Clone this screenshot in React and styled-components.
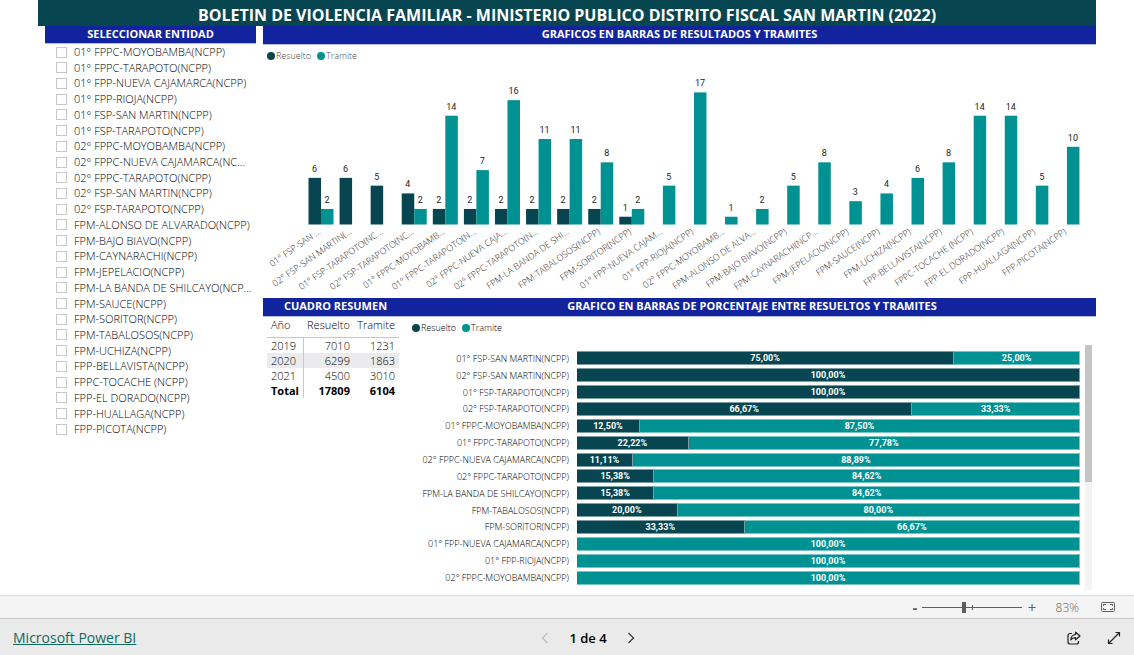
import React, { useState } from 'react'
import styled, { createGlobalStyle } from 'styled-components'

const DARK = '#074650'
const TEAL = '#009292'
const BLUE = '#12239e'

const entities = [
  '01° FPPC-MOYOBAMBA(NCPP)',
  '01° FPPC-TARAPOTO(NCPP)',
  '01° FPP-NUEVA CAJAMARCA(NCPP)',
  '01° FPP-RIOJA(NCPP)',
  '01° FSP-SAN MARTIN(NCPP)',
  '01° FSP-TARAPOTO(NCPP)',
  '02° FPPC-MOYOBAMBA(NCPP)',
  '02° FPPC-NUEVA CAJAMARCA(NC...',
  '02° FPPC-TARAPOTO(NCPP)',
  '02° FSP-SAN MARTIN(NCPP)',
  '02° FSP-TARAPOTO(NCPP)',
  'FPM-ALONSO DE ALVARADO(NCPP)',
  'FPM-BAJO BIAVO(NCPP)',
  'FPM-CAYNARACHI(NCPP)',
  'FPM-JEPELACIO(NCPP)',
  'FPM-LA BANDA DE SHILCAYO(NCP...',
  'FPM-SAUCE(NCPP)',
  'FPM-SORITOR(NCPP)',
  'FPM-TABALOSOS(NCPP)',
  'FPM-UCHIZA(NCPP)',
  'FPP-BELLAVISTA(NCPP)',
  'FPPC-TOCACHE (NCPP)',
  'FPP-EL DORADO(NCPP)',
  'FPP-HUALLAGA(NCPP)',
  'FPP-PICOTA(NCPP)',
]

// [label, resuelto, tramite]
const columns = [
  ['01° FSP-SAN ...', 6, 2],
  ['02° FSP-SAN MARTIN(...', 6, 0],
  ['01° FSP-TARAPOTO(NC...', 5, 0],
  ['02° FSP-TARAPOTO(NC...', 4, 2],
  ['01° FPPC-MOYOBAMB...', 2, 14],
  ['01° FPPC-TARAPOTO(N...', 2, 7],
  ['02° FPPC-NUEVA CAJA...', 2, 16],
  ['02° FPPC-TARAPOTO(N...', 2, 11],
  ['FPM-LA BANDA DE SHI...', 2, 11],
  ['FPM-TABALOSOS(NCPP)', 2, 8],
  ['FPM-SORITOR(NCPP)', 1, 2],
  ['01° FPP-NUEVA CAJAM...', 0, 5],
  ['01° FPP-RIOJA(NCPP)', 0, 17],
  ['02° FPPC-MOYOBAMB...', 0, 1],
  ['FPM-ALONSO DE ALVA...', 0, 2],
  ['FPM-BAJO BIAVO(NCPP)', 0, 5],
  ['FPM-CAYNARACHI(NCP...', 0, 8],
  ['FPM-JEPELACIO(NCPP)', 0, 3],
  ['FPM-SAUCE(NCPP)', 0, 4],
  ['FPM-UCHIZA(NCPP)', 0, 6],
  ['FPP-BELLAVISTA(NCPP)', 0, 8],
  ['FPPC-TOCACHE (NCPP)', 0, 14],
  ['FPP-EL DORADO(NCPP)', 0, 14],
  ['FPP-HUALLAGA(NCPP)', 0, 5],
  ['FPP-PICOTA(NCPP)', 0, 10],
]

const shares = [
  ['01° FSP-SAN MARTIN(NCPP)', 75],
  ['02° FSP-SAN MARTIN(NCPP)', 100],
  ['01° FSP-TARAPOTO(NCPP)', 100],
  ['02° FSP-TARAPOTO(NCPP)', 66.67],
  ['01° FPPC-MOYOBAMBA(NCPP)', 12.5],
  ['01° FPPC-TARAPOTO(NCPP)', 22.22],
  ['02° FPPC-NUEVA CAJAMARCA(NCPP)', 11.11],
  ['02° FPPC-TARAPOTO(NCPP)', 15.38],
  ['FPM-LA BANDA DE SHILCAYO(NCPP)', 15.38],
  ['FPM-TABALOSOS(NCPP)', 20],
  ['FPM-SORITOR(NCPP)', 33.33],
  ['01° FPP-NUEVA CAJAMARCA(NCPP)', 0],
  ['01° FPP-RIOJA(NCPP)', 0],
  ['02° FPPC-MOYOBAMBA(NCPP)', 0],
]

const summary = [
  [2019, 7010, 1231],
  [2020, 6299, 1863],
  [2021, 4500, 3010],
]

const percent = (n) => n.toFixed(2).replace('.', ',') + '%'

const GlobalStyle = createGlobalStyle`
  * {
    box-sizing: border-box;
  }

  body {
    margin: 0;
    background: #fff;
    color: #000;
    font-family: 'Open Sans', 'Noto Sans', sans-serif;
    font-size: 11px;
  }

  button {
    padding: 0;
    border: 0;
    background: none;
    font: inherit;
    color: inherit;
    cursor: pointer;
  }
`

const Page = styled.div`
  display: flex;
  flex-direction: column;
  min-height: 100vh;
`

const Report = styled.main`
  flex: 1;
  padding: 0 38px;
`

const Title = styled.h1`
  margin: 0;
  padding-top: 4px;
  height: 26px;
  background: ${DARK};
  color: #fff;
  font-size: 16px;
  line-height: 22px;
  font-weight: 700;
  text-align: center;
  white-space: nowrap;
`

const Body = styled.div`
  display: grid;
  grid-template-columns: 211px minmax(0, 1fr);
  gap: 7px;
  padding-left: 7px;
`

const Heading = styled.h2`
  margin: 0;
  height: ${({ $tall }) => ($tall ? 19 : 18)}px;
  border-bottom: 1px solid #b4b9e0;
  background: ${BLUE};
  color: #fff;
  font-size: 11px;
  line-height: 16px;
  font-weight: 700;
  text-align: center;
  white-space: nowrap;
`

const Slicer = styled.ul`
  display: grid;
  grid-template-rows: repeat(25, minmax(0, 1fr));
  height: 393px;
  margin: 0;
  padding: 0 0 0 11px;
  list-style: none;
`

const SlicerItem = styled.label`
  display: flex;
  align-items: center;
  gap: 7px;
  font-size: 11px;
  line-height: 16px;
  font-weight: 350;
  white-space: nowrap;
`

const Check = styled.input`
  appearance: none;
  flex: none;
  width: 11px;
  height: 11px;
  margin: 0;
  border: 1px solid #c8c8c8;
  background: #fff;

  &:checked {
    background: #333;
  }
`

const Legend = styled.div`
  display: flex;
  align-items: center;
  gap: 6px;
  height: 22px;
  padding-left: 4px;
  color: ${({ $dark }) => ($dark ? '#000' : '#484644')};
  font-size: 9px;
  line-height: 12px;
  font-weight: 350;
`

const LegendItem = styled.span`
  display: flex;
  align-items: center;
  gap: 1px;

  &::before {
    content: '';
    width: 8px;
    height: 8px;
    border-radius: 50%;
    background: ${({ $color }) => $color};
  }
`

const Chart = styled.svg`
  display: block;
  width: 100%;
`

const ValueText = styled.text`
  fill: #252423;
  font-family: Roboto, sans-serif;
  font-size: 9px;
  text-anchor: middle;
`

const AxisText = styled.text`
  fill: #252423;
  font-size: 9px;
  font-weight: 350;
  text-anchor: end;
`

const Lower = styled.div`
  display: grid;
  grid-template-columns: 145px minmax(0, 1fr);
`

const Table = styled.table`
  width: 132px;
  margin-left: 4px;
  border-collapse: collapse;
  font-size: 11px;
  line-height: 15px;

  th,
  td {
    padding: 0 4px 0 0;
    text-align: right;
    font-weight: 350;
  }

  th:first-child {
    width: 36px;
    padding-left: 4px;
    text-align: left;
  }

  thead th {
    height: 20px;
    padding-bottom: 5px;
    border-bottom: 1px solid #c8c8c8;
  }

  tbody th,
  tfoot th {
    border-right: 1px solid #c8c8c8;
  }

  tbody tr:nth-child(2) {
    background: #ebebed;
  }

  tfoot th,
  tfoot td {
    font-weight: 700;
  }
`

const ShareArea = styled.div`
  display: flex;
  gap: 5px;
  height: 245px;
  margin-top: 6px;
  padding-right: 4px;
`

const ShareRows = styled.div`
  flex: 1;
  display: grid;
  grid-template-rows: repeat(14, 1fr);
  height: 236px;
  margin-top: 5px;
`

const ShareRow = styled.div`
  display: grid;
  grid-template-columns: 161px minmax(0, 1fr);
  gap: 8px;
  align-items: center;
`

const ShareLabel = styled.span`
  font-size: 9px;
  line-height: 13px;
  font-weight: 350;
  text-align: right;
  white-space: nowrap;
`

const ShareBar = styled.div`
  display: flex;
  height: 14px;
`

const Segment = styled.div`
  background: ${({ $color }) => $color};
  background-clip: padding-box;
  border: 1px solid ${({ $color }) => $color}88;
  border-left-width: 0;
  color: #fff;
  font-family: Roboto, sans-serif;
  font-size: 9px;
  line-height: 13px;
  font-weight: 700;
  text-align: center;
`

const ScrollTrack = styled.div`
  width: 7px;
  background: #f3f3f3;
`

const ScrollThumb = styled.div`
  height: 137px;
  background: #c4c4c4;
`

const ZoomBar = styled.div`
  display: flex;
  align-items: center;
  justify-content: flex-end;
  height: 23px;
  padding-right: 18px;
  border-top: 1px solid #dedede;
  background: #f4f4f4;
  color: #605e5c;
  font-size: 12px;
`

const ZoomButton = styled.button`
  width: 14px;
  height: 20px;
  font-size: 15px;
  line-height: 20px;
  font-weight: ${({ $bold }) => ($bold ? 700 : 400)};
`

const ZoomRange = styled.input`
  appearance: none;
  width: 100px;
  height: 11px;
  margin: 0 3px 0 0;
  background:
    linear-gradient(#605e5c, #605e5c) center / 100% 1px no-repeat,
    linear-gradient(#605e5c, #605e5c) center / 1px 5px no-repeat;

  &::-webkit-slider-thumb {
    appearance: none;
    width: 4px;
    height: 11px;
    background: #605e5c;
  }
`

const ZoomValue = styled.output`
  width: 40px;
  margin-right: 21px;
  font-weight: 350;
  text-align: right;
`

const IconButton = styled.button`
  display: flex;
  align-items: center;
  justify-content: center;
  width: 16px;
  height: 16px;
`

const Footer = styled.footer`
  display: grid;
  grid-template-columns: 1fr auto 1fr;
  align-items: center;
  height: 37px;
  padding: 2px 12px 0 13px;
  border-top: 1px solid #c8c8c8;
  background: #eaeaea;
`

const BrandLink = styled.a`
  justify-self: start;
  color: #11695e;
  font-size: 14px;
  line-height: 20px;
`

const Pager = styled.nav`
  display: flex;
  align-items: center;
  gap: 16px;
  margin-left: 41px;
  font-size: 13px;
  font-weight: 600;
`

const Actions = styled.div`
  display: flex;
  justify-content: flex-end;
  gap: 24px;
`

const STEP = 31.08
const UNIT = 7.77
const BASE = 157.5

function ColumnChart() {
  return (
    <Chart viewBox="0 0 833 231" role="img" aria-label="Resultados y tramites">
      {columns.map(([label, resuelto, tramite], i) => {
        const mid = 58 + i * STEP
        return (
          <g key={i}>
            {[[resuelto, mid - 12.5, DARK], [tramite, mid, TEAL]].map(([n, x, color]) => n > 0 && (
              <g key={color}>
                <rect x={x} y={BASE - n * UNIT} width="12.5" height={n * UNIT} fill={color} />
                <ValueText x={x + 6} y={BASE - n * UNIT - 6}>{n}</ValueText>
              </g>
            ))}
            <AxisText transform={`translate(${mid} 166) rotate(-35)`}>{label}</AxisText>
          </g>
        )
      })}
    </Chart>
  )
}

function ChartLegend({ dark }) {
  return (
    <Legend $dark={dark}>
      <LegendItem $color={DARK}>Resuelto</LegendItem>
      <LegendItem $color={TEAL}>Tramite</LegendItem>
    </Legend>
  )
}

function Chevron({ back, color }) {
  return (
    <svg width="8" height="12" viewBox="0 0 8 12" fill="none" stroke={color} strokeWidth="1.2">
      <path d={back ? 'M6.5 1 1.5 6l5 5' : 'M1.5 1l5 5-5 5'} />
    </svg>
  )
}

function App() {
  const [zoom, setZoom] = useState(83)

  return (
    <Page>
      <GlobalStyle />
      <Report>
        <Title>BOLETIN DE VIOLENCIA FAMILIAR - MINISTERIO PUBLICO DISTRITO FISCAL SAN MARTIN (2022)</Title>
        <Body>
          <section>
            <Heading>SELECCIONAR ENTIDAD</Heading>
            <Slicer>
              {entities.map((name) => (
                <li key={name}>
                  <SlicerItem>
                    <Check type="checkbox" />
                    {name}
                  </SlicerItem>
                </li>
              ))}
            </Slicer>
          </section>
          <div>
            <section>
              <Heading $tall>GRAFICOS EN BARRAS DE RESULTADOS Y TRAMITES</Heading>
              <ChartLegend />
              <ColumnChart />
            </section>
            <Lower>
              <section>
                <Heading $tall>CUADRO RESUMEN</Heading>
                <Table>
                  <thead>
                    <tr>
                      <th scope="col">Año</th>
                      <th scope="col">Resuelto</th>
                      <th scope="col">Tramite</th>
                    </tr>
                  </thead>
                  <tbody>
                    {summary.map(([year, resuelto, tramite]) => (
                      <tr key={year}>
                        <th scope="row">{year}</th>
                        <td>{resuelto}</td>
                        <td>{tramite}</td>
                      </tr>
                    ))}
                  </tbody>
                  <tfoot>
                    <tr>
                      <th scope="row">Total</th>
                      <td>17809</td>
                      <td>6104</td>
                    </tr>
                  </tfoot>
                </Table>
              </section>
              <section>
                <Heading $tall>GRAFICO EN BARRAS DE PORCENTAJE ENTRE RESUELTOS Y TRAMITES</Heading>
                <ChartLegend dark />
                <ShareArea>
                  <ShareRows>
                    {shares.map(([label, value]) => (
                      <ShareRow key={label}>
                        <ShareLabel>{label}</ShareLabel>
                        <ShareBar>
                          {value > 0 && (
                            <Segment $color={DARK} style={{ width: `${value}%` }}>{percent(value)}</Segment>
                          )}
                          {value < 100 && (
                            <Segment $color={TEAL} style={{ width: `${100 - value}%` }}>{percent(100 - value)}</Segment>
                          )}
                        </ShareBar>
                      </ShareRow>
                    ))}
                  </ShareRows>
                  <ScrollTrack>
                    <ScrollThumb />
                  </ScrollTrack>
                </ShareArea>
              </section>
            </Lower>
          </div>
        </Body>
      </Report>
      <ZoomBar>
        <ZoomButton $bold aria-label="Alejar" onClick={() => setZoom(Math.max(0, zoom - 10))}>-</ZoomButton>
        <ZoomRange
          type="range"
          min="0"
          max="200"
          aria-label="Zoom"
          value={zoom}
          onChange={(e) => setZoom(+e.target.value)}
        />
        <ZoomButton aria-label="Acercar" onClick={() => setZoom(Math.min(200, zoom + 10))}>+</ZoomButton>
        <ZoomValue>{zoom}%</ZoomValue>
        <IconButton aria-label="Ajustar a la página">
          <svg width="14" height="10" viewBox="0 0 14 10" fill="none" stroke="#605e5c">
            <rect x="0.5" y="0.5" width="13" height="9" rx="1" />
            <path d="M2.5 4V2.5H5M9 2.5h2.500V4M11.500 6v1.500H9M5 7.500H2.500V6" />
          </svg>
        </IconButton>
      </ZoomBar>
      <Footer>
        <BrandLink href="#powerbi">Microsoft Power BI</BrandLink>
        <Pager aria-label="Páginas">
          <IconButton aria-label="Página anterior" disabled><Chevron back color="#bdbdbd" /></IconButton>
          <span>1 de 4</span>
          <IconButton aria-label="Página siguiente"><Chevron color="#333" /></IconButton>
        </Pager>
        <Actions>
          <IconButton aria-label="Compartir">
            <svg width="14" height="14" viewBox="0 0 14 14" fill="none" stroke="#222" strokeWidth="1.2">
              <path d="M5 2.500H3a2 2 0 0 0-2 2V11a2 2 0 0 0 2 2h6.500a2 2 0 0 0 2-2v-1" />
              <path d="M8.500 1.200 13 5 8.500 8.800V6.600C6 6.500 4.800 7.400 3.800 9 4 5.800 5.500 3.700 8.500 3.500z" strokeLinejoin="round" />
            </svg>
          </IconButton>
          <IconButton aria-label="Pantalla completa">
            <svg width="14" height="14" viewBox="0 0 14 14" fill="none" stroke="#222" strokeWidth="1.2">
              <path d="M1.500 12.500l11-11M8.500 1.500h4v4M1.500 8.500v4h4" />
            </svg>
          </IconButton>
        </Actions>
      </Footer>
    </Page>
  )
}

export default App
